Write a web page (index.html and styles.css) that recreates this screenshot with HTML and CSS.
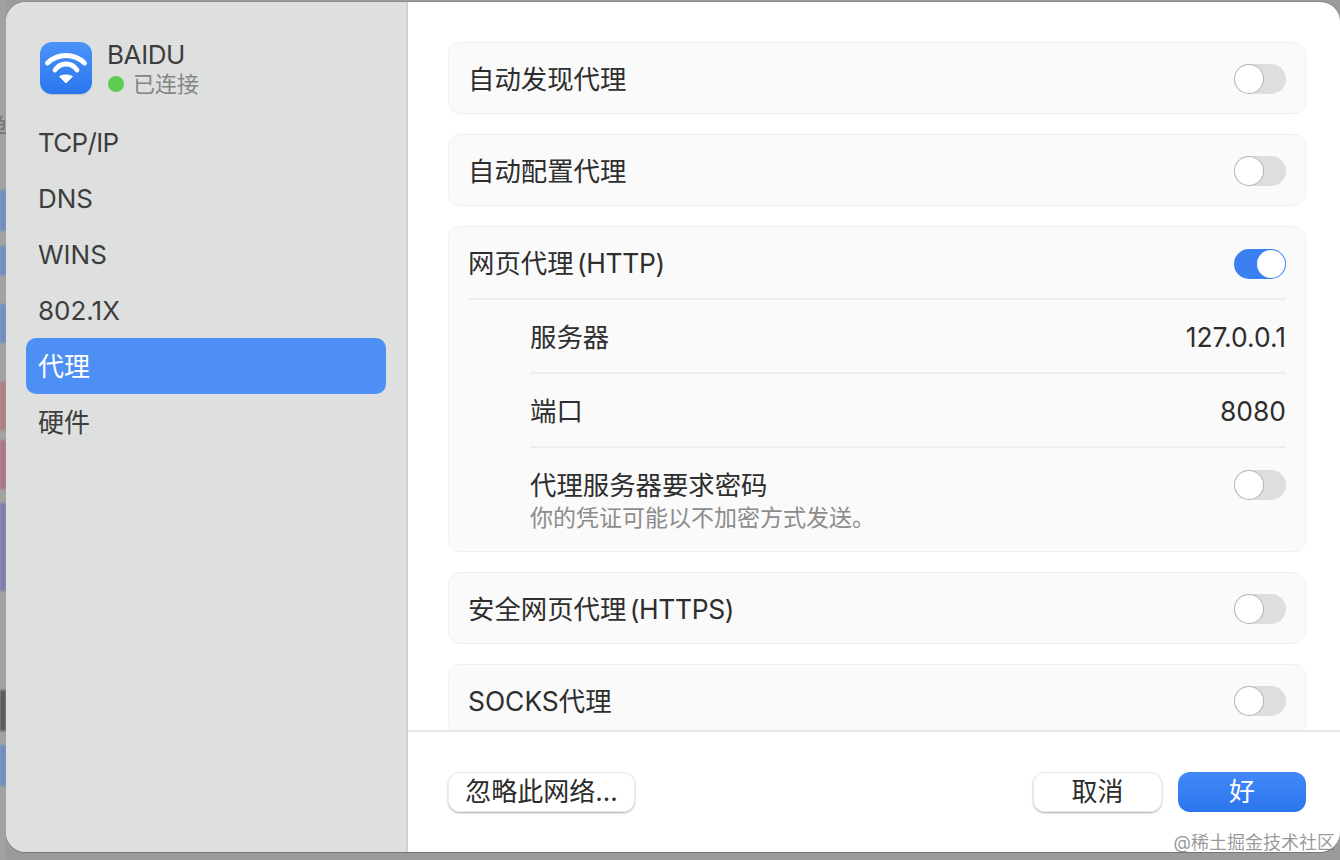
FILE: index.html
```html
<!DOCTYPE html>
<html lang="zh-CN">
<head>
<meta charset="utf-8">
<title>BAIDU 代理</title>
<link rel="stylesheet" href="styles.css">
</head>
<body>
<div class="stage">
  <div class="strip">
    <div class="bands">
      <div class="band b-gray" style="height:190px"></div>
      <div class="band b-blue" style="height:41px"></div>
      <div class="band b-gray" style="height:15px"></div>
      <div class="band b-blue" style="height:29px"></div>
      <div class="band b-gray" style="height:29px"></div>
      <div class="band b-blue" style="height:39px"></div>
      <div class="band b-gray" style="height:39px"></div>
      <div class="band b-red" style="height:48px"></div>
      <div class="band b-gray" style="height:10px"></div>
      <div class="band b-pink" style="height:49px"></div>
      <div class="band b-gray" style="height:14px"></div>
      <div class="band b-purple" style="height:88px"></div>
      <div class="band b-gray" style="height:99px"></div>
      <div class="band b-dark" style="height:41px"></div>
      <div class="band b-gray" style="height:14px"></div>
      <div class="band b-blue" style="height:41px"></div>
      <div class="band b-gray" style="height:74px"></div>
    </div>
    <span class="behind">单</span>
  </div>
  <div class="window">
    <aside class="sidebar">
      <div class="net">
        <div class="net-icon">
          <svg viewBox="0 0 52 52" width="52" height="52">
            <path class="arc" d="M7.5 21C18 11 34 11 44.5 21"/>
            <path class="arc" d="M15 28C20.5 20 31.5 20 37 28"/>
            <path class="wedge" d="M26 41L19.5 34.5C23 32.5 29 32.5 32.5 34.5Z"/>
          </svg>
        </div>
        <div class="net-text">
          <div class="net-name">BAIDU</div>
          <div class="net-status"><span class="dot"></span>已连接</div>
        </div>
      </div>
      <nav class="menu">
        <div class="menu-item tight">TCP/IP</div>
        <div class="menu-item">DNS</div>
        <div class="menu-item">WINS</div>
        <div class="menu-item">802.1X</div>
        <div class="menu-item selected">代理</div>
        <div class="menu-item">硬件</div>
      </nav>
    </aside>
    <main class="main">
      <div class="scroll">
        <section class="card">
          <div class="row top"><span>自动发现代理</span><span class="toggle"></span></div>
        </section>
        <section class="card">
          <div class="row top"><span>自动配置代理</span><span class="toggle"></span></div>
        </section>
        <section class="card">
          <div class="row top head"><span>网页代理 <span class="paren">(HTTP)</span></span><span class="toggle on"></span></div>
          <div class="sub">
            <div class="row value"><span>服务器</span><span class="num">127.0.0.1</span></div>
            <div class="row value"><span>端口</span><span class="num">8080</span></div>
            <div class="row pass">
              <div>
                <div class="pass-title">代理服务器要求密码</div>
                <div class="pass-note">你的凭证可能以不加密方式发送。</div>
              </div>
              <span class="toggle"></span>
            </div>
          </div>
        </section>
        <section class="card">
          <div class="row top"><span>安全网页代理 <span class="paren">(HTTPS)</span></span><span class="toggle"></span></div>
        </section>
        <section class="card">
          <div class="row top"><span>SOCKS代理</span><span class="toggle"></span></div>
        </section>
      </div>
      <footer class="footer">
        <button class="btn forget">忽略此网络...</button>
        <div class="actions">
          <button class="btn cancel">取消</button>
          <button class="btn ok">好</button>
        </div>
      </footer>
    </main>
  </div>
  <div class="watermark">@稀土掘金技术社区</div>
</div>
</body>
</html>
```
FILE: styles.css
```css
* { box-sizing: border-box; }
html, body { margin: 0; height: 100%; overflow: hidden; }
body {
  background: #9b9b9b;
  font-family: Inter, "Noto Sans CJK SC", "Noto Sans", sans-serif;
  color: #333;
}
.stage {
  position: relative;
  width: 1340px;
  height: 860px;
  display: flex;
  overflow: hidden;
}
.strip {
  position: relative;
  width: 6px;
  flex: none;
  overflow: hidden;
}
.bands {
  display: flex;
  flex-direction: column;
  filter: blur(1px);
}
.band { flex: none; }
.b-gray { background: #a3a3a3; }
.b-blue { background: #6f8fc6; }
.b-red { background: #b47c80; }
.b-pink { background: #b0748a; }
.b-purple { background: #7f7cb0; }
.b-dark { background: #5c5c5c; }
.behind {
  position: absolute;
  right: -2px;
  top: 112px;
  font-size: 24px;
  line-height: 32px;
  color: #777;
}
.window {
  width: 1334px;
  height: 850px;
  margin-top: 2px;
  flex: none;
  display: flex;
  border-radius: 20px;
  overflow: hidden;
  background: #fff;
  box-shadow: 0 -1px 0 #8a8a8a, 0 1px 0 #777;
}
.sidebar {
  width: 402px;
  flex: none;
  background: #dee0df;
  border-right: 2px solid #d0d0d0;
  padding: 40px 20px 0 20px;
}
.net {
  display: flex;
  gap: 15px;
  padding-left: 14px;
  height: 72px;
}
.net-icon {
  width: 52px;
  height: 52px;
  border-radius: 12px;
  background: linear-gradient(#4b93f8, #2a76ee);
  box-shadow: 0 1px 1px rgba(0, 0, 0, .15);
}
.net-icon svg { display: block; }
.arc { fill: none; stroke: #fff; stroke-width: 4.8; stroke-linecap: round; }
.wedge { fill: #fff; stroke: #fff; stroke-width: 1; stroke-linejoin: round; }
.net-text {
  display: flex;
  flex-direction: column;
  margin-top: -2px;
}
.net-name {
  font-size: 26px;
  line-height: 30px;
  letter-spacing: -.4px;
  color: #3c3c3c;
}
.net-status {
  display: flex;
  align-items: center;
  font-size: 22px;
  line-height: 28px;
  color: #858585;
  padding-left: 1px;
}
.dot {
  width: 16px;
  height: 16px;
  border-radius: 50%;
  background: #5ecb55;
  margin-right: 9px;
}
.menu { display: flex; flex-direction: column; }
.menu-item {
  height: 56px;
  line-height: 54px;
  padding: 2px 0 0 12px;
  border-radius: 10px;
  font-size: 26px;
  color: #3d3d3d;
}
.menu-item.tight { letter-spacing: -.7px; }
.menu-item.selected { background: #4e8ff5; color: #fff; }
.main {
  flex: 1;
  display: flex;
  flex-direction: column;
  min-width: 0;
}
.scroll {
  height: 728px;
  flex: none;
  overflow: hidden;
  padding: 40px 34px 0 40px;
  display: flex;
  flex-direction: column;
  gap: 20px;
}
.card {
  flex: none;
  background: #fafafa;
  border: 1px solid #f0f0f0;
  border-radius: 12px;
  padding: 0 19px;
}
.row {
  display: flex;
  align-items: center;
  justify-content: space-between;
  font-size: 26.4px;
  word-spacing: -4px;
  color: #2e2e2e;
}
.paren { letter-spacing: -.35px; }
.top { height: 70px; padding-bottom: 2px; }
.head { height: 73px; border-bottom: 2px solid #eeeeee; }
.sub { padding-left: 62px; }
.value { height: 74px; padding-bottom: 2px; border-bottom: 2px solid #eeeeee; }
.num { margin-top: 3px; }
.pass { height: 103px; align-items: flex-start; padding-top: 20px; }
.pass-title { line-height: 34px; }
.pass-note { font-size: 23px; line-height: 32px; color: #8c8c8c; }
.toggle {
  position: relative;
  width: 52px;
  height: 30px;
  flex: none;
  margin-top: 4px;
  border-radius: 15px;
  background: #dedede;
}
.pass .toggle { margin-top: 2px; }
.toggle::after {
  content: "";
  position: absolute;
  left: 1px;
  top: 1px;
  width: 28px;
  height: 28px;
  border-radius: 50%;
  background: #fff;
  box-shadow: 0 0 0 1px #b5b5b5;
}
.toggle.on { background: #3a80f0; }
.toggle.on::after { left: 23px; box-shadow: none; }
.footer {
  flex: 1;
  border-top: 2px solid #e6e6e6;
  display: flex;
  justify-content: space-between;
  align-items: flex-start;
  padding: 40px 34px 0 40px;
}
.actions { display: flex; gap: 16px; }
.btn {
  height: 40px;
  border: 0;
  border-radius: 12px;
  padding: 0;
  font-family: inherit;
  font-size: 26px;
  line-height: 38px;
  background: #fff;
  color: #2b2b2b;
  box-shadow: inset 0 0 0 1px #ececec, 0 1px 2px rgba(0, 0, 0, .35);
}
.forget { width: 187px; }
.cancel { width: 129px; }
.ok {
  width: 128px;
  color: #fff;
  background: linear-gradient(#4488f7, #2a75ee);
  box-shadow: none;
}
.watermark {
  position: absolute;
  right: 5px;
  bottom: 5px;
  font-size: 18px;
  line-height: 24px;
  color: rgba(120, 120, 120, .75);
}
```
